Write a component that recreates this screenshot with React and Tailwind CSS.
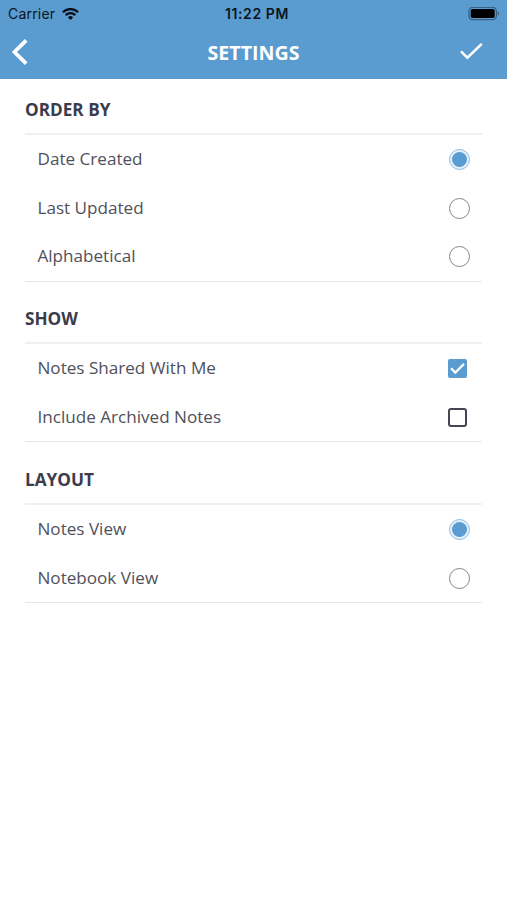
import { useState } from 'react'

const sections = [
  {
    id: 'order',
    title: 'ORDER BY',
    type: 'radio',
    className: 'pt-[18px]',
    options: ['Date Created', 'Last Updated', 'Alphabetical'],
  },
  {
    id: 'show',
    title: 'SHOW',
    type: 'checkbox',
    className: 'pt-6',
    options: ['Notes Shared With Me', 'Include Archived Notes'],
  },
  {
    id: 'layout',
    title: 'LAYOUT',
    type: 'radio',
    className: 'pt-[24.6px]',
    options: ['Notes View', 'Notebook View'],
  },
]

function StatusBar() {
  return (
    <div className="grid h-[27px] grid-cols-3 items-center pl-2 pr-[7px] font-['Inter',sans-serif] text-[14px] leading-none text-[#0b1620]">
      <div className="flex items-center gap-[7px]">
        <span className="tracking-[0.2px]">Carrier</span>
        <svg className="h-3 w-[17px]" viewBox="0 0 17 12" fill="none" stroke="#071018" strokeWidth="2.3">
          <path d="M0.9 4.2a10.8 10.8 0 0 1 15.2 0" />
          <path d="M3.7 7.1a6.8 6.8 0 0 1 9.6 0" />
          <path d="M8.5 12L5.9 9.4a3.7 3.7 0 0 1 5.2 0z" fill="#071018" stroke="none" />
        </svg>
      </div>
      <span className="pl-[6px] text-center text-[14px] font-semibold tracking-[0.6px]">11:22 PM</span>
      <svg className="h-[14px] w-[32px] justify-self-end" viewBox="0 0 32 14">
        <rect x="1" y="0.3" width="27.4" height="12.4" rx="3.6" fill="none" stroke="#2f5473" strokeWidth="1" />
        <rect x="2.7" y="2" width="24" height="9" rx="1.8" fill="#000" />
        <path d="M29.8 4.3c1.6 0.8 1.6 3.6 0 4.4z" fill="#2f5473" />
      </svg>
    </div>
  )
}

function Radio({ checked }) {
  if (checked) {
    return (
      <span className="flex size-[21px] items-center justify-center rounded-full border border-[#8dbbe2] bg-[#e3f1fc]">
        <span className="size-[15px] rounded-full bg-[#5a9bd0]" />
      </span>
    )
  }
  return <span className="size-[21px] rounded-full border-[1.5px] border-[#858589] bg-white" />
}

function Checkbox({ checked }) {
  if (checked) {
    return (
      <span className="mr-[3px] flex size-[19px] items-center justify-center rounded-[2px] bg-[#5a9bd0]">
        <svg className="size-[19px]" viewBox="0 0 19 19" fill="none" stroke="white" strokeWidth="2.2">
          <path d="M3 9.3l4.3 4.3L16 4.9" />
        </svg>
      </span>
    )
  }
  return <span className="mr-[3px] size-[19px] rounded-[3px] border-2 border-[#444453]" />
}

export default function App() {
  const [selected, setSelected] = useState({
    order: ['Date Created'],
    show: ['Notes Shared With Me'],
    layout: ['Notes View'],
  })

  const handleSelect = (section, option) => {
    setSelected(prev => {
      if (section.type === 'radio') return { ...prev, [section.id]: [option] }
      const current = prev[section.id]
      return {
        ...prev,
        [section.id]: current.includes(option) ? current.filter(o => o !== option) : [...current, option],
      }
    })
  }

  return (
    <div className="min-h-screen bg-white font-['Open_Sans','Noto_Sans',sans-serif]">
      <header className="h-[79px] bg-[#5a9bd0]">
        <StatusBar />
        <div className="grid h-[50px] grid-cols-3 items-center pl-3 pr-6 text-white">
          <button aria-label="Back" className="w-4">
            <svg className="h-[26px] w-4" viewBox="0 0 16 26" fill="none" stroke="currentColor" strokeWidth="3.8">
              <path d="M14.2 1.4L2.4 13l11.8 11.6" />
            </svg>
          </button>
          <h1 className="pl-3 pt-px text-center text-[19.6px] font-bold">SETTINGS</h1>
          <button aria-label="Save" className="justify-self-end">
            <svg className="h-[18px] w-[23px]" viewBox="0 0 23 18" fill="none" stroke="currentColor" strokeWidth="2.6">
              <path d="M1 8.4l6.4 6.3L21.8 0.9" />
            </svg>
          </button>
        </div>
      </header>

      <main className="px-[25px]">
        {sections.map(section => (
          <section key={section.id} className={section.className}>
            <h2 className="h-9 text-[17.2px] font-bold leading-[25px] text-[#3b3c4b]">{section.title}</h2>
            <ul className="border-b border-t-2 border-b-[#e6e6e8] border-t-[#f0f0f1]">
              {section.options.map(option => (
                <li key={option}>
                  <button
                    onClick={() => handleSelect(section, option)}
                    className="flex h-[48.7px] w-full items-center justify-between pl-[12.5px] pr-3 text-[17.1px] text-[#50505b]"
                  >
                    <span className="pb-px">{option}</span>
                    {section.type === 'radio' ? (
                      <Radio checked={selected[section.id].includes(option)} />
                    ) : (
                      <Checkbox checked={selected[section.id].includes(option)} />
                    )}
                  </button>
                </li>
              ))}
            </ul>
          </section>
        ))}
      </main>
    </div>
  )
}
